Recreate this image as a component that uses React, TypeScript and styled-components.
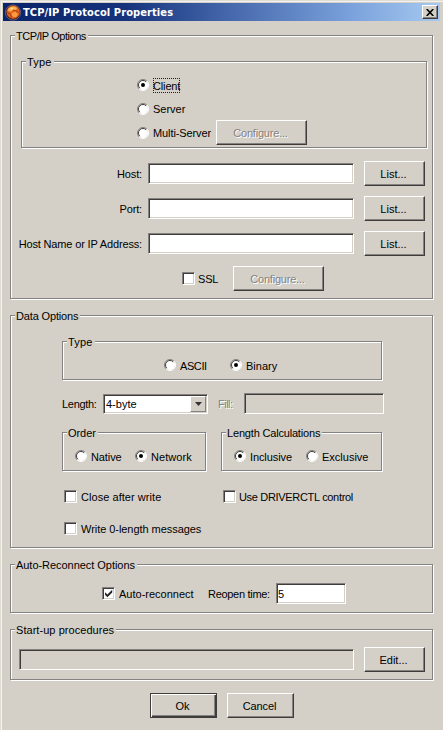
import React from "react";
import styled, { createGlobalStyle, css } from "styled-components";

const FACE = "#d4d0c8";
const SHADE = "#848280";
const DARK = "#403c3a";

const GlobalStyle = createGlobalStyle`
  body { margin: 0; background: ${FACE}; overflow: hidden; }
  * { box-sizing: border-box; }
`;

const Dialog = styled.main`
  width: 443px;
  height: 730px;
  display: flex;
  flex-direction: column;
  padding: 3px 0 0 0;
  background: ${FACE};
  box-shadow: inset 1px 1px 0 #e0ddd6, inset 2px 2px 0 #f4f2ee;
  font: 11px/14px "Liberation Sans", Arial, sans-serif;
  color: #000;
`;

const TitleBar = styled.header`
  display: flex;
  align-items: center;
  height: 18px;
  margin: 0 3px 14px 3px;
  padding: 0 2px;
  background: linear-gradient(90deg, #0a246a 0%, #16337c 28%, #4668ac 52%, #7ba2dc 80%, #a6caf0 100%);
`;

const Title = styled.h1`
  flex: 1;
  margin: 1px 0 0 2px;
  font: bold 11px/16px "DejaVu Sans Condensed", "DejaVu Sans", sans-serif;
  font-stretch: condensed;
  letter-spacing: 0.1px;
  white-space: nowrap;
  color: #fff;
`;

const CloseButton = styled.button`
  display: flex;
  align-items: center;
  justify-content: center;
  width: 16px;
  height: 14px;
  padding: 0;
  border: 1px solid;
  border-color: #fff ${DARK} ${DARK} #fff;
  box-shadow: inset -1px -1px 0 ${SHADE};
  background: ${FACE};
`;

const Group = styled.section<{ $w?: number; $h: number; $ml?: number; $mt?: number }>`
  display: flex;
  flex-direction: column;
  flex: none;
  width: ${(p) => p.$w ?? 423}px;
  height: ${(p) => p.$h}px;
  margin: ${(p) => p.$mt ?? 0}px 0 0 ${(p) => p.$ml ?? 10}px;
  border: 1px solid ${SHADE};
  box-shadow: 1px 1px 0 #fff, inset 1px 1px 0 #fff;
`;

const Legend = styled.h2<{ $ls?: number }>`
  align-self: flex-start;
  height: 14px;
  margin: -7px 0 -7px 4px;
  padding: 0 2px 0 1px;
  font: inherit;
  letter-spacing: ${(p) => p.$ls ?? 0}px;
  white-space: nowrap;
  background: ${FACE};
`;

const Row = styled.div<{ $h: number; $ml?: number; $mt?: number }>`
  display: flex;
  align-items: center;
  flex: none;
  height: ${(p) => p.$h}px;
  margin: ${(p) => p.$mt ?? 0}px 0 0 ${(p) => p.$ml ?? 0}px;
`;

const Text = styled.span<{ $w?: number; $ml?: number; $right?: boolean; $muted?: boolean; $ls?: number }>`
  flex: none;
  width: ${(p) => (p.$w ? `${p.$w}px` : "auto")};
  margin-left: ${(p) => p.$ml ?? 0}px;
  text-align: ${(p) => (p.$right ? "right" : "left")};
  letter-spacing: ${(p) => p.$ls ?? 0}px;
  white-space: nowrap;
  ${(p) => p.$muted && css`color: ${SHADE}; text-shadow: 1px 1px 0 #fff;`}
`;

const OptionLabel = styled.label<{ $w?: number; $ml?: number; $gap?: number; $ls?: number }>`
  display: flex;
  align-items: center;
  flex: none;
  gap: ${(p) => p.$gap ?? 4}px;
  width: ${(p) => (p.$w ? `${p.$w}px` : "auto")};
  margin-left: ${(p) => p.$ml ?? 0}px;
  letter-spacing: ${(p) => p.$ls ?? 0}px;
  white-space: nowrap;
`;

const OptionText = styled.span<{ $focus?: boolean }>`
  padding-top: 1px;
  ${(p) => p.$focus && css`outline: 1px dotted #222; outline-offset: -1px;`}
`;

const Field = styled.input<{ $w: number; $ml?: number; $h?: number }>`
  flex: none;
  width: ${(p) => p.$w}px;
  height: ${(p) => p.$h ?? 21}px;
  margin: 0 0 0 ${(p) => p.$ml ?? 0}px;
  padding: 0 0 0 1px;
  border: 1px solid;
  border-color: ${SHADE} #fff #fff ${SHADE};
  border-radius: 0;
  outline: 0;
  box-shadow: inset 1px 1px 0 ${DARK}, inset -1px -1px 0 ${FACE};
  background: #fff;
  color: #000;
  font: inherit;
  &:disabled { background: ${FACE}; }
`;

const Button = styled.button<{ $w: number; $ml?: number; $primary?: boolean; $ls?: number }>`
  flex: none;
  width: ${(p) => p.$w}px;
  height: 25px;
  margin: 0 0 0 ${(p) => p.$ml ?? 0}px;
  padding: 0 2px 0 0;
  border: 1px solid;
  border-color: #fff ${DARK} ${DARK} #fff;
  box-shadow: inset -1px -1px 0 ${SHADE};
  background: ${FACE};
  color: #000;
  font: inherit;
  letter-spacing: ${(p) => p.$ls ?? 0}px;
  &:disabled { color: ${SHADE}; text-shadow: 1px 1px 0 #fff; }
  ${(p) => p.$primary && css`
    border-color: ${DARK};
    box-shadow: inset 1px 1px 0 #fff, inset -1px -1px 0 ${DARK}, inset -2px -2px 0 ${SHADE};
  `}
`;

const Box = styled.span`
  display: flex;
  align-items: center;
  justify-content: center;
  width: 13px;
  height: 13px;
  border: 1px solid;
  border-color: ${SHADE} #fff #fff ${SHADE};
  box-shadow: inset 1px 1px 0 ${DARK}, inset -1px -1px 0 ${FACE};
  background: #fff;
`;

const Combo = styled.div`
  display: flex;
  align-items: stretch;
  flex: none;
  width: 105px;
  height: 20px;
  margin-left: 6px;
  padding: 1px;
  border: 1px solid;
  border-color: ${SHADE} #fff #fff ${SHADE};
  box-shadow: inset 1px 1px 0 ${DARK}, inset -1px -1px 0 ${FACE};
  background: #fff;
`;

const ComboValue = styled.span`
  flex: 1;
  padding-left: 1px;
  line-height: 17px;
`;

const ComboArrow = styled.span`
  display: flex;
  align-items: center;
  justify-content: center;
  width: 16px;
  border: 1px solid;
  border-color: #fff ${SHADE} ${SHADE} #fff;
  background: ${FACE};
`;

const Radio = ({ on }: { on?: boolean }) => (
  <svg width="12" height="12" viewBox="0 0 12 12">
    <circle cx="6" cy="6" r="5" fill="#fff" />
    <path d="M2.1 9.9A5.5 5.5 0 0 1 9.9 2.1" fill="none" stroke={SHADE} />
    <path d="M2.8 9.2A4.5 4.5 0 0 1 9.2 2.8" fill="none" stroke={DARK} />
    <path d="M9.9 2.1A5.5 5.5 0 0 1 2.1 9.9" fill="none" stroke="#fff" />
    {on && <circle cx="6" cy="6" r="2" fill="#000" />}
  </svg>
);

const Check = () => (
  <svg width="9" height="9" viewBox="0 0 9 9">
    <path d="M1 3.2v2.6l2.4 2.4L8.2 3.4V.8L3.4 5.6z" fill="#222" />
  </svg>
);

const AppIcon = () => (
  <svg width="16" height="17" viewBox="0 0 16 17">
    <circle cx="8" cy="8.5" r="7.6" fill="#331c29" stroke="#8d7480" strokeWidth=".7" />
    <circle cx="8.2" cy="8.2" r="6.6" fill="#df6420" />
    <path d="M3 5.2C5.2 1.8 9.8 1.6 12.2 4l-1.4 2.2-2.6-.8-1.8 2.2-3-.4z" fill="#ffb050" />
    <path d="M7.4 8.4l3-.6 2.6 2.4-2 3-3.4-.6-1-2.2z" fill="#ff9a3e" />
    <path d="M2.2 8.6l3 1.2 1.2 3.6M8 7l2.6-.6 3 2" fill="none" stroke="#a83414" strokeWidth=".9" />
    <path d="M5 4.6l2-1 1.2.6-1.4 1.2z" fill="#ffe2a0" />
  </svg>
);

type OptionProps = {
  label: string; on?: boolean; ml?: number; w?: number; ls?: number; gap?: number; focus?: boolean;
};

const RadioOption = ({ label, on, ml, w, ls, gap, focus }: OptionProps) => (
  <OptionLabel $ml={ml} $w={w} $ls={ls} $gap={gap}>
    <Radio on={on} />
    <OptionText $focus={focus}>{label}</OptionText>
  </OptionLabel>
);

const CheckOption = ({ label, on, ml, w, ls, gap }: OptionProps) => (
  <OptionLabel $ml={ml} $w={w} $ls={ls} $gap={gap}>
    <Box>{on && <Check />}</Box>
    <OptionText>{label}</OptionText>
  </OptionLabel>
);

const addressFields = ["Host:", "Port:", "Host Name or IP Address:"];

export default function App() {
  return (
    <Dialog>
      <GlobalStyle />
      <TitleBar>
        <AppIcon />
        <Title>TCP/IP Protocol Properties</Title>
        <CloseButton aria-label="Close">
          <svg width="8" height="7" viewBox="0 0 8 7">
            <path d="M.7 0l6.6 7M7.3 0L.7 7" stroke="#000" strokeWidth="1.6" />
          </svg>
        </CloseButton>
      </TitleBar>

      <Group $h={264}>
        <Legend $ls={-0.45}>TCP/IP Options</Legend>
        <Group $w={406} $h={87} $ml={10} $mt={25}>
          <Legend $ls={0.2}>Type</Legend>
          <Row $h={24} $ml={115} $mt={11}><RadioOption label="Client" on focus ls={-0.15} /></Row>
          <Row $h={23} $ml={115}><RadioOption label="Server" /></Row>
          <Row $h={25} $ml={115}>
            <RadioOption label="Multi-Server" w={79} ls={-0.1} />
            <Button $w={91} $ls={-0.2} disabled>Configure...</Button>
          </Row>
        </Group>
        {addressFields.map((label, i) => (
          <Row key={label} $h={25} $mt={i ? 10 : 13}>
            <Text $w={131} $right $ls={-0.15}>{label}</Text>
            <Field $w={206} $ml={6} aria-label={label} />
            <Button $w={61} $ml={10}>List...</Button>
          </Row>
        ))}
        <Row $h={25} $ml={171} $mt={10}>
          <CheckOption label="SSL" w={51} gap={3} ls={-0.2} />
          <Button $w={91} $ls={-0.2} disabled>Configure...</Button>
        </Row>
      </Group>

      <Group $h={233} $mt={16}>
        <Legend $ls={-0.15}>Data Options</Legend>
        <Group $w={320} $h={39} $ml={51} $mt={25}>
          <Legend $ls={0.2}>Type</Legend>
          <Row $h={24} $ml={101} $mt={11}>
            <RadioOption label="ASCII" w={66} ls={-0.4} />
            <RadioOption label="Binary" on />
          </Row>
        </Group>
        <Row $h={21} $ml={51} $mt={13}>
          <Text $w={35} $ls={-0.3}>Length:</Text>
          <Combo>
            <ComboValue>4-byte</ComboValue>
            <ComboArrow>
              <svg width="7" height="4" viewBox="0 0 7 4"><path d="M0 0h7L3.5 4z" fill="#333" /></svg>
            </ComboArrow>
          </Combo>
          <Text $w={26} $ml={10} $muted $ls={-0.5}>Fill:</Text>
          <Field $w={140} disabled aria-label="Fill" />
        </Row>
        <Row $h={39} $ml={51} $mt={18}>
          <Group $w={144} $h={39} $ml={0}>
            <Legend $ls={-0.05}>Order</Legend>
            <Row $h={24} $ml={12} $mt={11}>
              <RadioOption label="Native" w={60} ls={-0.1} />
              <RadioOption label="Network" on ls={0.05} />
            </Row>
          </Group>
          <Group $w={161} $h={39} $ml={15}>
            <Legend $ls={-0.18}>Length Calculations</Legend>
            <Row $h={24} $ml={12} $mt={11}>
              <RadioOption label="Inclusive" w={72} on ls={-0.1} />
              <RadioOption label="Exclusive" />
            </Row>
          </Group>
        </Row>
        <Row $h={14} $ml={53} $mt={18}>
          <CheckOption label="Close after write" w={159} ls={0.05} />
          <CheckOption label="Use DRIVERCTL control" gap={3} ls={-0.32} />
        </Row>
        <Row $h={14} $ml={53} $mt={18}><CheckOption label="Write 0-length messages" ls={-0.05} /></Row>
      </Group>

      <Group $h={49} $mt={16}>
        <Legend $ls={-0.04}>Auto-Reconnect Options</Legend>
        <Row $h={21} $ml={91} $mt={18}>
          <CheckOption label="Auto-reconnect" on w={106} />
          <Text $w={68} $ls={-0.3}>Reopen time:</Text>
          <Field $w={70} defaultValue="5" aria-label="Reopen time" />
        </Row>
      </Group>

      <Group $h={51} $mt={16}>
        <Legend $ls={0.05}>Start-up procedures</Legend>
        <Row $h={25} $ml={8} $mt={17}>
          <Field $w={335} disabled aria-label="Start-up procedures" />
          <Button $w={61} $ml={10}>Edit...</Button>
        </Row>
      </Group>

      <Row $h={25} $ml={150} $mt={13}>
        <Button $w={67} $primary>Ok</Button>
        <Button $w={67} $ml={10} $ls={-0.15}>Cancel</Button>
      </Row>
    </Dialog>
  );
}
